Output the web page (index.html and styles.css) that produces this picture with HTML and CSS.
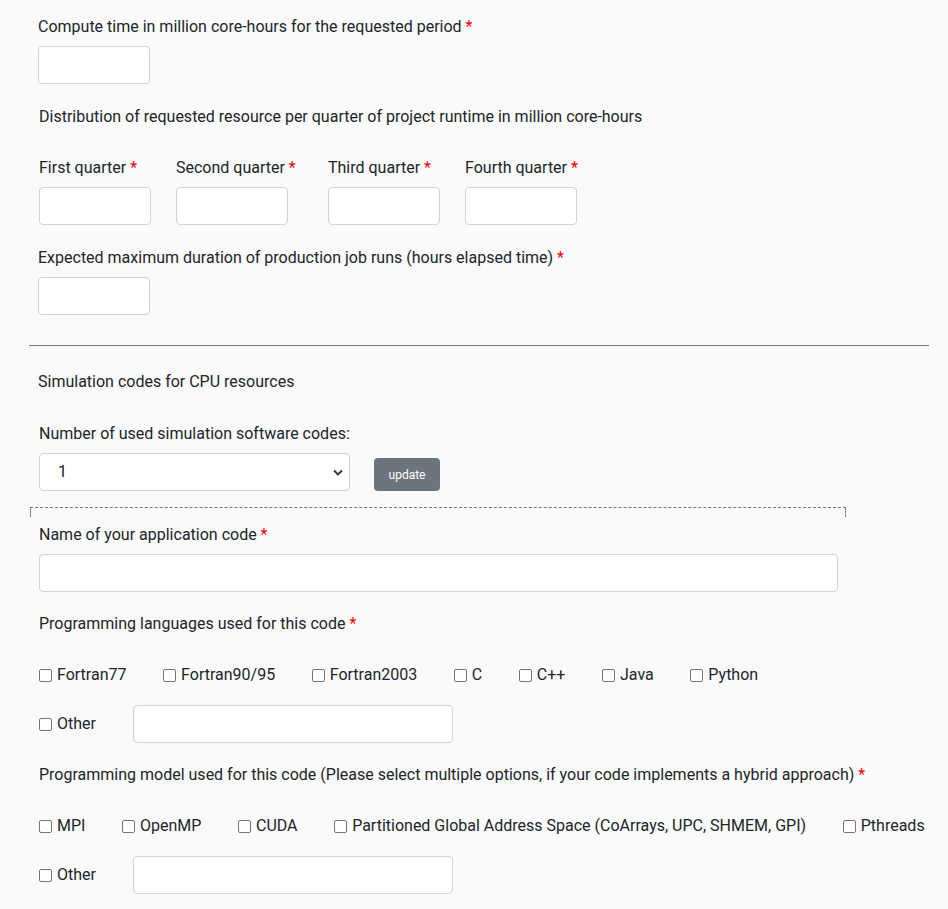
FILE: index.html
```html
<!DOCTYPE html>
<html>
<head>
<meta charset="utf-8">
<link rel="stylesheet" href="styles.css">
</head>
<body>
<div class="page">
  <div class="group g-compute">
    <label class="lbl">Compute time in million core-hours for the requested period <span class="req">*</span></label>
    <input class="inp small" type="text">
  </div>

  <div class="lbl g-dist">Distribution of requested resource per quarter of project runtime in million core-hours</div>

  <div class="quarters">
    <div class="qcol">
      <label class="lbl">First quarter <span class="req">*</span></label>
      <input class="inp small" type="text">
    </div>
    <div class="qcol">
      <label class="lbl">Second quarter <span class="req">*</span></label>
      <input class="inp small" type="text">
    </div>
    <div class="qcol">
      <label class="lbl">Third quarter <span class="req">*</span></label>
      <input class="inp small" type="text">
    </div>
    <div class="qcol">
      <label class="lbl">Fourth quarter <span class="req">*</span></label>
      <input class="inp small" type="text">
    </div>
  </div>

  <div class="group g-duration">
    <label class="lbl">Expected maximum duration of production job runs (hours elapsed time) <span class="req">*</span></label>
    <input class="inp small" type="text">
  </div>

  <hr class="sep">

  <div class="lbl g-sim">Simulation codes for CPU resources</div>

  <div class="g-number">
    <label class="lbl">Number of used simulation software codes:</label>
    <div class="select-row">
      <div class="select">1</div>
      <button class="btn">update</button>
    </div>
  </div>

  <div class="dashed"></div>

  <div class="code">
    <div class="group g-name">
      <label class="lbl">Name of your application code <span class="req">*</span></label>
      <input class="inp wide" type="text">
    </div>

    <div class="lbl g-lang">Programming languages used for this code <span class="req">*</span></div>
    <div class="checks">
      <label class="chk"><span class="box"></span>Fortran77</label>
      <label class="chk"><span class="box"></span>Fortran90/95</label>
      <label class="chk"><span class="box"></span>Fortran2003</label>
      <label class="chk"><span class="box"></span>C</label>
      <label class="chk"><span class="box"></span>C++</label>
      <label class="chk"><span class="box"></span>Java</label>
      <label class="chk"><span class="box"></span>Python</label>
    </div>
    <div class="other">
      <label class="chk"><span class="box"></span>Other</label>
      <input class="inp other-inp" type="text">
    </div>

    <div class="lbl g-model">Programming model used for this code (Please select multiple options, if your code implements a hybrid approach) <span class="req">*</span></div>
    <div class="checks">
      <label class="chk"><span class="box"></span>MPI</label>
      <label class="chk"><span class="box"></span>OpenMP</label>
      <label class="chk"><span class="box"></span>CUDA</label>
      <label class="chk"><span class="box"></span>Partitioned Global Address Space (CoArrays, UPC, SHMEM, GPI)</label>
      <label class="chk"><span class="box"></span>Pthreads</label>
    </div>
    <div class="other">
      <label class="chk"><span class="box"></span>Other</label>
      <input class="inp other-inp" type="text">
    </div>
  </div>
</div>
</body>
</html>
```

FILE: styles.css
```css
* { box-sizing: border-box; }
html, body { margin: 0; padding: 0; background: #fafafa; }
body {
  font-family: Roboto, "Liberation Sans", sans-serif;
  font-size: 16px;
  line-height: 24px;
  color: #212529;
}
.page { padding: 15px 0 0 38px; width: 948px; height: 909px; overflow: hidden; }
.lbl { display: block; white-space: nowrap; }
.req { color: #ff0000; }
.inp {
  display: block;
  height: 38px;
  border: 1px solid #ced4da;
  border-radius: 4px;
  background: #fff;
  font: inherit;
  padding: 0 12px;
}
.small { width: 112px; }
.group .inp { margin-top: 7px; }

.g-dist { margin-top: 21px; padding-left: 1px; }
.quarters {
  display: grid;
  grid-template-columns: 137px 152px 137px auto;
  margin-top: 27px;
  padding-left: 1px;
}
.qcol .inp { margin-top: 7px; }
.g-duration { margin-top: 21px; }
.sep {
  margin: 30px 0 0 -9px;
  width: 900px;
  border: 0;
  border-top: 1px solid #777;
  height: 0;
}
.g-sim { margin-top: 24px; }
.g-number { margin-top: 28px; padding-left: 1px; }
.select-row { display: flex; align-items: flex-start; margin-top: 7px; }
.select {
  width: 311px;
  height: 38px;
  border: 1px solid #ced4da;
  border-radius: 4px;
  background: #fff url("data:image/svg+xml,%3Csvg xmlns='http://www.w3.org/2000/svg' width='10' height='7' viewBox='0 0 10 7'%3E%3Cpath d='M1 1.5l4 4 4-4' fill='none' stroke='%23333' stroke-width='1.8'/%3E%3C/svg%3E") no-repeat right 6px center;
  padding: 6px 0 0 18px;
  line-height: 24px;
}
.btn {
  margin: 5px 0 0 24px;
  width: 66px;
  height: 33px;
  border: 0;
  border-radius: 4px;
  background: #6c757d;
  color: #fff;
  font-family: Roboto, "Liberation Sans", sans-serif;
  font-size: 12px;
  padding: 0;
}
.dashed {
  margin: 16px 0 0 -8px;
  width: 816px;
  height: 10px;
  border: 1px dashed #777;
  border-bottom: 0;
}
.code { padding-left: 1px; }
.g-name { margin-top: 6px; }
.wide { width: 799px; }
.g-lang { margin-top: 20px; }
.checks { display: flex; gap: 36.6px; margin-top: 27px; }
.chk { display: flex; align-items: center; white-space: nowrap; }
.box {
  display: inline-block;
  width: 13px;
  height: 13px;
  border: 1px solid #767676;
  border-radius: 2px;
  background: #fff;
  margin-right: 5px;
}
.other { display: grid; grid-template-columns: 94px 320px; align-items: center; margin-top: 18px; }
.other-inp { width: 320px; }
.g-model { margin-top: 20px; }
```
